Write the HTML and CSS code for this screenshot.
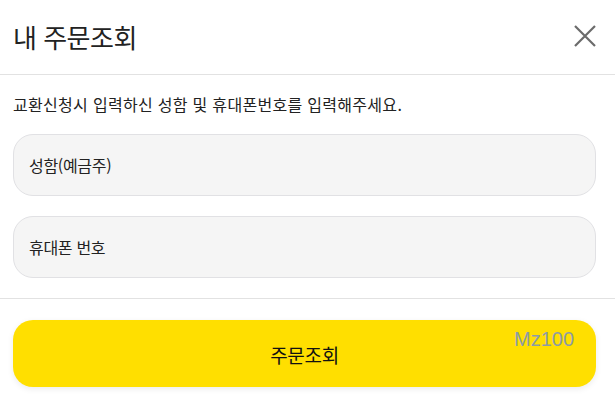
FILE: index.html
```html
<!DOCTYPE html>
<html lang="ko">
<head>
<meta charset="utf-8">
<link rel="stylesheet" href="styles.css">
</head>
<body>
<div class="modal">
  <header class="head">
    <h1 class="title">내 주문조회</h1>
    <button class="close" aria-label="닫기">
      <svg width="22" height="22" viewBox="0 0 22 22"><path d="M1 1L21 21M21 1L1 21" stroke="#6b6b6b" stroke-width="2.2" fill="none"/></svg>
    </button>
  </header>
  <section class="body">
    <p class="desc">교환신청시 입력하신 성함 및 휴대폰번호를 입력해주세요.</p>
    <div class="field">성함(예금주)</div>
    <div class="field">휴대폰 번호</div>
  </section>
  <footer class="foot">
    <button class="submit">주문조회<span class="tag">Mz100</span></button>
  </footer>
</div>
</body>
</html>
```
FILE: styles.css
```css
* { box-sizing: border-box; }
html, body { margin: 0; padding: 0; background: #fff; }
body { font-family: "Noto Sans CJK KR", "Noto Sans", sans-serif; color: #222; width: 615px; height: 396px; overflow: hidden; }
.modal { display: flex; flex-direction: column; }
.head { height: 75px; display: flex; align-items: center; justify-content: space-between; padding: 0 19px 2px 13px; border-bottom: 1px solid #e2e2e2; }
.title { margin: 0; font-size: 26px; font-weight: 400; color: #222; letter-spacing: -0.5px; }
.close { background: none; border: 0; padding: 0; width: 22px; height: 22px; display: flex; }
.body { padding: 19px 19px 20px 13px; border-bottom: 1px solid #e2e2e2; display: flex; flex-direction: column; gap: 20px; }
.desc { margin: 0; font-size: 16px; line-height: 20px; color: #222; letter-spacing: 0.3px; }
.field { height: 62px; border: 1px solid #e1e1e4; background: #f5f5f5; border-radius: 20px; display: flex; align-items: center; padding-left: 15px; font-size: 16px; color: #222; letter-spacing: -0.3px; }
.foot { padding: 21px 19px 9px 13px; }
.submit { position: relative; width: 583px; height: 67px; border: 0; border-radius: 20px; background: #ffdf00; box-shadow: 0 2px 6px rgba(0,0,0,0.08); font-family: inherit; font-size: 19px; font-weight: 400; color: #111; padding-top: 2px; letter-spacing: -0.3px; }
.tag { position: absolute; right: 22px; top: 8px; font-family: "Liberation Sans", sans-serif; font-size: 20px; font-weight: 400; letter-spacing: 0; color: #8c9ba6; }
```
